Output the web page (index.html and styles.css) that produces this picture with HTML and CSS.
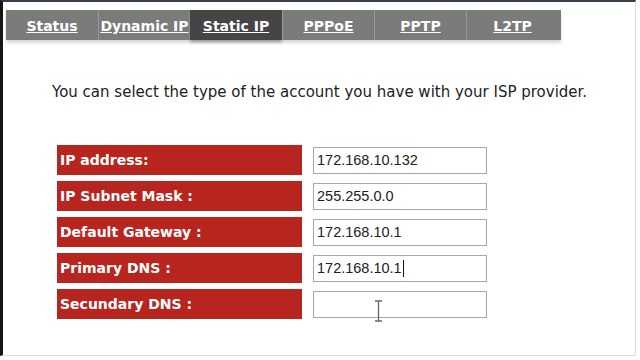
FILE: index.html
```html
<!DOCTYPE html>
<html lang="en">
<head>
    <meta charset="UTF-8">
    <title>WAN Setting</title>
    <link rel="stylesheet" href="styles.css">
</head>
<body>

    <div class="frame">
        <ul class="tabs">
            <li><a href="#">Status</a></li>
            <li><a href="#">Dynamic IP</a></li>
            <li class="active"><a href="#">Static IP</a></li>
            <li><a href="#">PPPoE</a></li>
            <li><a href="#">PPTP</a></li>
            <li><a href="#">L2TP</a></li>
        </ul>

        <p class="intro">You can select the type of the account you have with your ISP provider.</p>

        <table class="form">
            <tr><th>IP address:</th><td><input value="172.168.10.132"></td></tr>
            <tr><th>IP Subnet Mask :</th><td><input value="255.255.0.0"></td></tr>
            <tr><th>Default Gateway :</th><td><input value="172.168.10.1"></td></tr>
            <tr><th>Primary DNS :</th><td><div class="field"><input value="172.168.10.1"><span class="caret"></span></div></td></tr>
            <tr><th>Secundary DNS :</th><td><div class="field"><input value=""><svg class="ibeam" width="9" height="22" viewBox="0 0 9 22"><path d="M1 1h7M4.5 1v20M1 21h7" stroke="#666" stroke-width="1.3" fill="none"/></svg></div></td></tr>
        </table>
    </div>

</body>
</html>
```

FILE: styles.css
```css
body {
    margin: 0;
    background: #fff;
    font-family: "DejaVu Sans", Verdana, sans-serif;
}
.frame {
    height: 356px;
    border-top: 2px solid #34404e;
    border-left: 3px solid #151515;
    border-right: 1px solid #ddd;
    border-bottom: 1px solid #ddd;
    margin-right: 4px;
    box-sizing: border-box;
}
.tabs {
    list-style: none;
    margin: 8px 0 0 3px;
    padding: 0;
    display: flex;
    width: 555px;
    background: #7b7b7b;
    box-shadow: 0 3px 3px #d8d8d8;
}
.tabs li {
    width: 92px;
    height: 30px;
    line-height: 32px;
    text-align: center;
    border-left: 1px solid #999;
    box-sizing: border-box;
}
.tabs li:first-child {
    border-left: none;
}
.tabs li.active {
    background: #454545;
    border-left: none;
    box-shadow: 0 2px 3px #999;
}
.tabs a {
    color: #fff;
    font-weight: bold;
    font-size: 14px;
}
.intro {
    margin: 43px 0 0 49px;
    font-size: 15px;
    color: #222;
}
.form {
    margin: 38px 0 0 51px;
    border-spacing: 3px 6px;
}
.form th {
    width: 245px;
    height: 30px;
    padding: 0 0 0 3px;
    box-sizing: border-box;
    background: #b8251f;
    color: #fff;
    text-align: left;
    font-size: 14px;
}
.form td {
    padding: 0 0 0 8px;
}
.form input {
    width: 174px;
    height: 27px;
    box-sizing: border-box;
    border: 1px solid #a0a8b0;
    padding: 0 3px;
    font-family: "Liberation Sans", Arial, sans-serif;
    font-size: 14.5px;
    color: #222;
}
.field {
    position: relative;
}
.caret {
    position: absolute;
    left: 90px;
    top: 5px;
    width: 1px;
    height: 17px;
    background: #111;
}
.ibeam {
    position: absolute;
    left: 61px;
    top: 9px;
}
```
